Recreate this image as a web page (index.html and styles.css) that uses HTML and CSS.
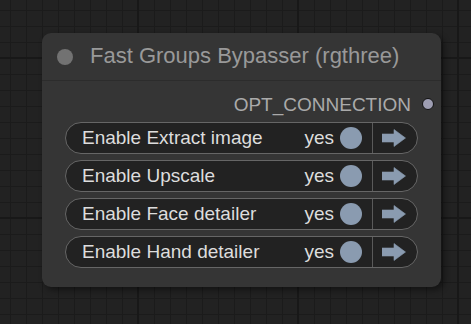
FILE: index.html
```html
<!DOCTYPE html>
<html>
<head>
<meta charset="utf-8">
<link rel="stylesheet" href="styles.css">
</head>
<body>
<div class="canvas">
  <div class="node">
    <div class="node-title">
      <span class="title-dot"></span>
      <span class="title-text">Fast Groups Bypasser (rgthree)</span>
    </div>
    <div class="node-body">
      <div class="output">
        <span class="output-label">OPT_CONNECTION</span>
        <span class="output-dot"></span>
      </div>
      <div class="widgets">
        <div class="widget">
          <span class="w-label">Enable Extract image</span>
          <span class="w-value">yes</span>
          <span class="w-toggle"></span>
          <span class="w-sep"></span>
          <span class="w-arrow"><svg width="24" height="20" viewBox="0 0 24 20"><path d="M0 6 H12 V1.5 L23.5 10 L12 18.5 V14 H0 Z" fill="#8a9bb0" stroke="#8a9bb0" stroke-width="0.6" stroke-linejoin="round"/></svg></span>
        </div>
        <div class="widget">
          <span class="w-label">Enable Upscale</span>
          <span class="w-value">yes</span>
          <span class="w-toggle"></span>
          <span class="w-sep"></span>
          <span class="w-arrow"><svg width="24" height="20" viewBox="0 0 24 20"><path d="M0 6 H12 V1.5 L23.5 10 L12 18.5 V14 H0 Z" fill="#8a9bb0" stroke="#8a9bb0" stroke-width="0.6" stroke-linejoin="round"/></svg></span>
        </div>
        <div class="widget">
          <span class="w-label">Enable Face detailer</span>
          <span class="w-value">yes</span>
          <span class="w-toggle"></span>
          <span class="w-sep"></span>
          <span class="w-arrow"><svg width="24" height="20" viewBox="0 0 24 20"><path d="M0 6 H12 V1.5 L23.5 10 L12 18.5 V14 H0 Z" fill="#8a9bb0" stroke="#8a9bb0" stroke-width="0.6" stroke-linejoin="round"/></svg></span>
        </div>
        <div class="widget">
          <span class="w-label">Enable Hand detailer</span>
          <span class="w-value">yes</span>
          <span class="w-toggle"></span>
          <span class="w-sep"></span>
          <span class="w-arrow"><svg width="24" height="20" viewBox="0 0 24 20"><path d="M0 6 H12 V1.5 L23.5 10 L12 18.5 V14 H0 Z" fill="#8a9bb0" stroke="#8a9bb0" stroke-width="0.6" stroke-linejoin="round"/></svg></span>
        </div>
      </div>
    </div>
  </div>
</div>
</body>
</html>
```

FILE: styles.css
```css
html, body {
  margin: 0;
  padding: 0;
}
body {
  width: 471px;
  height: 324px;
  overflow: hidden;
  font-family: "Liberation Sans", Arial, sans-serif;
}
.canvas {
  width: 471px;
  height: 324px;
  box-sizing: border-box;
  padding: 33px 0 0 42px;
  background-color: #222222;
  background-image:
    linear-gradient(to right, #181818 0 2px, transparent 2px),
    linear-gradient(to bottom, #181818 0 2px, transparent 2px),
    linear-gradient(to right, #1b1b1b 0 1px, transparent 1px),
    linear-gradient(to bottom, #1b1b1b 0 1px, transparent 1px);
  background-size: 160px 160px, 160px 160px, 16px 16px, 16px 16px;
  background-position: 137px 0, 0 57px, 10px 0, 0 10px;
}
.node {
  width: 399px;
  height: 254px;
  background: #353535;
  border-radius: 9px;
  box-shadow: 3px 3px 6px rgba(0,0,0,0.45);
  display: flex;
  flex-direction: column;
}
.node-title {
  height: 47px;
  border-bottom: 1px solid #2c2c2c;
  display: flex;
  align-items: center;
  padding-left: 15px;
  gap: 17px;
}
.title-dot {
  width: 16px;
  height: 16px;
  border-radius: 50%;
  background: #727272;
  flex: none;
}
.title-text {
  color: #999999;
  font-size: 22px;
  line-height: 22px;
  padding-bottom: 1px;
}
.node-body {
  display: flex;
  flex-direction: column;
  padding: 0 23px;
}
.output {
  height: 41px;
  box-sizing: border-box;
  padding-top: 5px;
  display: flex;
  align-items: center;
  justify-content: flex-end;
  margin-right: -16px;
  gap: 11px;
}
.output-label {
  color: #aaaaaa;
  font-size: 19px;
  line-height: 19px;
}
.output-dot {
  width: 10px;
  height: 10px;
  border-radius: 50%;
  background: #9d9db2;
  border: 1.5px solid #111111;
  flex: none;
}
.widgets {
  display: flex;
  flex-direction: column;
  gap: 6px;
}
.widget {
  height: 30px;
  border: 1px solid #666666;
  border-radius: 16px;
  background: #222222;
  display: flex;
  align-items: center;
  padding-left: 16px;
}
.w-label {
  color: #dddddd;
  font-size: 19px;
  flex: 1;
}
.w-value {
  color: #dddddd;
  font-size: 19px;
}
.w-toggle {
  width: 22px;
  height: 22px;
  border-radius: 50%;
  background: #8a9bb0;
  margin-left: 6px;
  flex: none;
}
.w-sep {
  width: 1px;
  align-self: stretch;
  background: #5a5a5a;
  margin-left: 10px;
}
.w-arrow {
  display: flex;
  align-items: center;
  width: 44px;
  padding-left: 9px;
  box-sizing: border-box;
}
```
